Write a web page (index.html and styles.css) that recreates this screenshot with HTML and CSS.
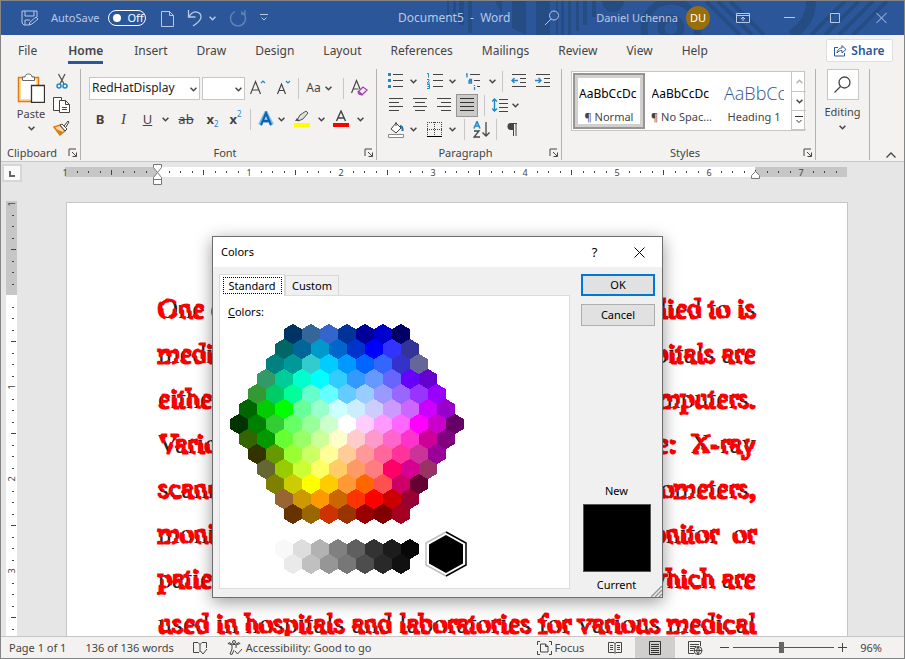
FILE: index.html
```html
<!DOCTYPE html>
<html lang="en">
<head>
<meta charset="utf-8">
<title>Document5 - Word</title>
<link rel="stylesheet" href="styles.css">
</head>
<body>
<svg class="defs" aria-hidden="true">
  <symbol id="chev" viewBox="0 0 6 6"><path d="M.5 1.500 3 4l2.500-2.500" fill="none" stroke="currentColor" stroke-width="1.300"/></symbol>
  <symbol id="launch" viewBox="0 0 10 10"><path d="M1 8V1h7M4 4l4 4M8.500 4.500v4h-4" fill="none" stroke="#444"/></symbol>
</svg>
<div class="window">
  <header class="titlebar">
    <svg class="pattern" viewBox="0 0 465 34" preserveAspectRatio="xMaxYMin slice" fill="#264d83" aria-hidden="true">
      <path d="M8 0h2v18H8zM14 0h3v18h-3zM20 0h5v24h-5zM29 0h4v32h-4zM56 0h7v14zM73 0h14v34l-14-7zM97 0h14v34H97zM117 0h2v34h-2zM122 0h3v34h-3zM129 0h3v34h-3zM137 0h3v30h-3zM144 0h4v24h-4zM153 0h4v16h-4z"/>
      <circle cx="174" cy="0" r="11"/>
      <g fill="none" stroke="#264d83" stroke-width="7"><circle cx="232" cy="27" r="10"/><circle cx="232" cy="27" r="27"/><path d="M267 0l34 34M279 0l34 34M291 0l34 34" stroke-width="4"/><path d="M372 0q0 22-20 34" stroke-width="10"/><path d="M372 34 406 0M386 34 420 0M400 34 434 0M414 34 448 0" stroke-width="4"/></g>
    </svg>
    <div class="quick">
      <button aria-label="Save"><svg width="17" height="17" viewBox="0 0 17 17" fill="none" stroke="currentColor"><path d="M8 15H3l-2-2V1h15v6M4 1v5h9V1M4 15v-5h5M8 15l1-3 6-5 2 2-6 5z"/></svg></button>
      <label class="autosave">AutoSave <input type="checkbox" role="switch"><span class="switch">Off</span></label>
      <button aria-label="New"><svg width="13" height="17" viewBox="0 0 13 17" fill="none" stroke="currentColor"><path d="M.5 1.500h8l4 4v11H.5zM8.500 1.500v4h4"/></svg></button>
      <button class="undo" aria-label="Undo"><svg width="16" height="18" viewBox="0 0 16 18" fill="none" stroke="currentColor" stroke-width="1.300"><path d="M1.500 1v7h7M2 7.500C7 0 14 3 14 8c0 4-5 7-8 9"/></svg><svg class="ch"><use href="#chev"/></svg></button>
      <button class="faded" aria-label="Repeat"><svg width="18" height="18" viewBox="0 0 18 18" fill="none" stroke="currentColor" stroke-width="1.300"><path d="M6 2.500A7.500 7.500 0 1 0 12 2.500M16 1v4h-4"/></svg></button>
      <button aria-label="Customize"><svg width="8" height="8" viewBox="0 0 8 8" fill="none" stroke="currentColor"><path d="M0 .5h8M1.500 3.500 4 6l2.500-2.500"/></svg></button>
    </div>
    <div class="doc-name">Document5&nbsp; -&nbsp; Word</div>
    <div class="account">
      <button aria-label="Search"><svg width="16" height="16" viewBox="0 0 16 16" fill="none" stroke="currentColor"><circle cx="10" cy="5.500" r="4.500"/><path d="m7 9-6 6"/></svg></button>
      <span>Daniel Uchenna</span><b class="avatar">DU</b>
    </div>
    <div class="controls">
      <button aria-label="Ribbon options"><svg width="14" height="12" viewBox="0 0 14 12" fill="none" stroke="currentColor"><path d="M.5 1.500h13v9H.5zM.5 3.500h13M7 9V5M5 7l2-2 2 2"/></svg></button>
      <button aria-label="Minimize"><svg width="11" height="12" stroke="currentColor"><path d="M0 5.500h11"/></svg></button>
      <button aria-label="Maximize"><svg width="11" height="12" fill="none" stroke="currentColor"><path d="M.5 1.500h9v9h-9z"/></svg></button>
      <button aria-label="Close"><svg width="11" height="12" stroke="currentColor"><path d="m.5 1 10 10m0-10-10 10"/></svg></button>
    </div>
  </header>

  <nav class="tabs">
    <a href="#file">File</a><a href="#home" class="active">Home</a><a href="#insert">Insert</a><a href="#draw">Draw</a><a href="#design">Design</a><a href="#layout">Layout</a><a href="#references">References</a><a href="#mailings">Mailings</a><a href="#review">Review</a><a href="#view">View</a><a href="#help">Help</a>
    <button class="share"><svg width="13" height="13" viewBox="0 0 13 13" fill="none" stroke="currentColor"><path d="M4 3.500H.5v8.500h10V9M3 9c.5-4 3-5 5-5V1.500L12 5.500 8 9V6.500C6 6.500 4 7 3 9z"/></svg>Share</button>
  </nav>

  <section class="ribbon">
    <div class="group clipboard">
      <div class="tools">
        <button class="paste"><svg width="28" height="30" viewBox="0 0 28 30" fill="none"><path d="M1.500 4.500h20v24h-20z" fill="#fcdd9e" stroke="#e07b12" stroke-width="1.500"/><path d="M4 7h15v19H4z" fill="#fff"/><path d="M5.500 7.500V4H8C8 0 15 0 15 4h2.500v3.500z" fill="#fff" stroke="#666"/><path d="M14.500 12.500h13v17h-13z" fill="#fff" stroke="#333" stroke-width="1.300"/></svg>Paste<svg class="ch"><use href="#chev"/></svg></button>
        <div class="clip-side">
          <button aria-label="Cut"><svg width="12" height="17" viewBox="0 0 12 17" fill="none"><path d="M2.500 1 8 11M9 1 4 11" stroke="#555" stroke-width="1.300"/><circle cx="3" cy="13" r="2" stroke="#1e88c9" stroke-width="1.500"/><circle cx="9" cy="13" r="2" stroke="#1e88c9" stroke-width="1.500"/></svg></button>
          <button aria-label="Copy"><svg width="17" height="16" viewBox="0 0 17 16" fill="#fff" stroke="#444"><path d="M6 13.500H.5V.5h8V3M6.500 3.500h6l4 4v8h-10zM12.500 3.500v4h4M9 10.500h5M9 12.500h5"/></svg></button>
          <button aria-label="Format Painter"><svg width="17" height="16" viewBox="0 0 17 16"><path d="m1 7 6-2 5 6-5 4z" fill="#fcd9a5" stroke="#e07b12" stroke-width="1.500"/><path d="m3 9 7 3-3 3z" fill="#e07b12"/><path d="m7 5 2-1 5 5-2 2zM11 6l4-5 1 1-3 5" fill="#fff" stroke="#444"/></svg></button>
        </div>
      </div>
      <div class="caption"><span>Clipboard</span><button aria-label="Clipboard options"><svg><use href="#launch"/></svg></button></div>
    </div>

    <div class="group font">
      <div class="tools">
        <div class="row f1">
          <span class="pick"><select class="face" aria-label="Font"><option>RedHatDisplay</option></select><svg class="ch"><use href="#chev"/></svg></span>
          <span class="pick small"><select aria-label="Font size"><option></option></select><svg class="ch"><use href="#chev"/></svg></span>
          <button aria-label="Grow font"><svg width="16" height="20" viewBox="0 0 16 20" fill="none" stroke="#444" stroke-width="1.200"><path d="M.5 16 5.500 3.500 10.500 16M2.500 12h6"/><path d="m11 5 2-2 2 2" stroke="#1e88c9"/></svg></button>
          <button aria-label="Shrink font"><svg width="15" height="20" viewBox="0 0 15 20" fill="none" stroke="#444" stroke-width="1.200"><path d="M1.500 16 5.500 6l4 10M3 12.500h5"/><path d="m10 3 2 2 2-2" stroke="#1e88c9"/></svg></button>
          <i class="bar"></i>
          <button class="case">Aa<svg class="ch"><use href="#chev"/></svg></button>
          <i class="bar"></i>
          <button aria-label="Clear formatting"><svg width="17" height="18" viewBox="0 0 17 18" fill="none" stroke="#444" stroke-width="1.200"><path d="M.5 14 5.500 1.500 9 10M2.500 10h5"/><path d="m7 13 5-5 4 3-5 5-3-1z" fill="#f3f2f1" stroke="#a63db0" stroke-width="1.300"/><path d="m8.500 12 3 3-2 1-2-2z" fill="#a63db0" stroke="none"/></svg></button>
        </div>
        <div class="row f2">
          <button><b>B</b></button><button class="ital">I</button><button><u>U</u></button><button aria-label="Underline style"><svg class="ch"><use href="#chev"/></svg></button>
          <button><s>ab</s></button><button class="script"><b>x</b><sub>2</sub></button><button class="script"><b>x</b><sup>2</sup></button><i class="bar"></i>
          <button aria-label="Text effects"><svg width="16" height="16" viewBox="0 0 16 16" fill="none"><path d="M2 14 8 2l6 12M5 10h6" stroke="#7dbdea" stroke-width="4"/><path d="M3 14 8 2l5 12M5 10h6" stroke="#0c62ad" stroke-width="2"/></svg></button>
          <button aria-label="Effects list"><svg class="ch"><use href="#chev"/></svg></button>
          <button aria-label="Highlight"><svg width="17" height="18" viewBox="0 0 17 18"><path d="m4 10 3-5 6-4 2 2-5 6-5 2z" fill="#ddd" stroke="#555"/><path d="M1 13h16v4H1z" fill="#ff0"/><path d="m2 11 2-3 3 3z" fill="#555"/></svg></button>
          <button aria-label="Highlight list"><svg class="ch"><use href="#chev"/></svg></button>
          <button aria-label="Font color"><svg width="16" height="18" viewBox="0 0 16 18"><path d="M3.500 11 8 1l4.500 10M5 8h6" fill="none" stroke="#444" stroke-width="1.400"/><path d="M0 13h16v4H0z" fill="red"/></svg></button>
          <button aria-label="Color list"><svg class="ch"><use href="#chev"/></svg></button>
        </div>
      </div>
      <div class="caption"><span>Font</span><button aria-label="Font options"><svg><use href="#launch"/></svg></button></div>
    </div>

    <div class="group para">
      <div class="tools">
        <div class="row p1">
          <button aria-label="Bullets"><svg width="17" height="16" viewBox="0 0 17 16"><path d="M1 0h3v3H1zM1 6h3v3H1zM1 12h3v3H1z" fill="#1e88c9"/><path d="M6 1.500h10M6 7.500h10M6 13.500h10" stroke="#444"/></svg></button><button aria-label="Bullet list"><svg class="ch"><use href="#chev"/></svg></button>
          <button aria-label="Numbering"><svg width="17" height="16" viewBox="0 0 17 16" fill="none"><path d="M1 .5h1.500v4M1 6.500h2v1.500l-2 2h3M1 11.500h2.500v4H1M1.500 13.500h2" stroke="#1e88c9"/><path d="M7 1.500h10M7 7.500h10M7 13.500h10" stroke="#444"/></svg></button><button aria-label="Number list"><svg class="ch"><use href="#chev"/></svg></button>
          <button aria-label="Multilevel list"><svg width="16" height="17" viewBox="0 0 16 17" fill="none"><path d="M1 1h1v3.500M4 6.500h2.500V10H4V8h2M9.500 12v1M9.500 14v3" stroke="#1e88c9" stroke-width="1.300"/><path d="M5 1.500h10M9 7.500h6M12 13.500h3" stroke="#444"/></svg></button><button aria-label="Levels"><svg class="ch"><use href="#chev"/></svg></button>
          <i class="bar"></i>
          <button aria-label="Decrease indent"><svg width="15" height="14" viewBox="0 0 15 14" fill="none" stroke="#444"><path d="M1 .5h14M9 4.500h6M9 8.500h6M1 12.500h14"/><path d="M7 6.500H1M3.500 4 1 6.500 3.500 9" stroke="#1e88c9" stroke-width="1.400"/></svg></button>
          <button aria-label="Increase indent"><svg width="15" height="14" viewBox="0 0 15 14" fill="none" stroke="#444"><path d="M1 .5h14M9 4.500h6M9 8.500h6M1 12.500h14"/><path d="M0 6.500h6M3.500 4 6 6.500 3.500 9" stroke="#1e88c9" stroke-width="1.400"/></svg></button>
        </div>
        <div class="row p2">
          <button aria-label="Align left"><svg width="15" height="14" viewBox="0 0 15 14" stroke="#444"><path d="M0 .5h14M0 4.500h10M0 8.500h14M0 12.500h10"/></svg></button>
          <button aria-label="Center"><svg width="15" height="14" viewBox="0 0 15 14" stroke="#444"><path d="M0 .5h14M2 4.500h10M0 8.500h14M2 12.500h10"/></svg></button>
          <button aria-label="Align right"><svg width="15" height="14" viewBox="0 0 15 14" stroke="#444"><path d="M0 .5h14M4 4.500h10M0 8.500h14M4 12.500h10"/></svg></button>
          <button class="on" aria-label="Justify"><svg width="14" height="14" viewBox="0 0 14 14" stroke="#333"><path d="M0 .5h14M0 4.500h14M0 8.500h14M0 12.500h14"/></svg></button>
          <i class="bar"></i>
          <button aria-label="Line spacing"><svg width="16" height="14" viewBox="0 0 16 14" fill="none" stroke="#444"><path d="M7 1.500h9M7 5.500h9M7 9.500h9M7 13.500h9"/><path d="M2.500 1v12M0 3.500 2.500 1 5 3.500M0 10.500 2.500 13 5 10.500" stroke="#1e88c9" stroke-width="1.400"/></svg></button><button aria-label="Spacing list"><svg class="ch"><use href="#chev"/></svg></button>
        </div>
        <div class="row p3">
          <button aria-label="Shading"><svg width="17" height="17" viewBox="0 0 17 17"><path d="m3 8 5-6 5 5-5 5zM8 5V1" fill="#fff" stroke="#444"/><path d="M12 5q3 0 2.500 5" fill="none" stroke="#1e6fb0" stroke-width="2"/><path d="M.5 13.500h15v3H.5z" fill="#fff" stroke="#888"/></svg></button><button aria-label="Shades"><svg class="ch"><use href="#chev"/></svg></button>
          <button aria-label="Borders"><svg width="15" height="15" viewBox="0 0 15 15" fill="none" stroke="#444"><path d="M.5 0v14M14.500 0v14M7.500 0v14M0 .5h15M0 7.500h15" stroke-dasharray="1 1"/><path d="M0 14.500h15" stroke="#000"/></svg></button><button aria-label="Border list"><svg class="ch"><use href="#chev"/></svg></button>
          <i class="bar"></i>
          <button aria-label="Sort"><svg width="17" height="17" viewBox="0 0 17 17" fill="none" stroke="#444" stroke-width="1.300"><path d="M1 7.500 4 .5l3 7M2 5h4" stroke="#1e88c9" stroke-width="1.500"/><path d="M1 10h5l-5 6h6M13 1v14M9.500 11.500 13 15l3.500-3.500"/></svg></button>
          <i class="bar"></i>
          <button aria-label="Show marks"><svg width="11" height="13" viewBox="0 0 11 13"><path d="M10 .5H4.500M6.500 0v13M9 .5V13" fill="none" stroke="#444"/><path d="M7 0H4a3.500 3.500 0 0 0 0 7h3z" fill="#444"/></svg></button>
        </div>
      </div>
      <div class="caption"><span>Paragraph</span><button aria-label="Paragraph options"><svg><use href="#launch"/></svg></button></div>
    </div>

    <div class="group styles">
      <div class="tools">
        <div class="gallery">
          <button class="chosen"><span>AaBbCcDc</span><small>¶ Normal</small></button>
          <button><span>AaBbCcDc</span><small>¶ No Spac...</small></button>
          <button class="heading"><span>AaBbCc</span><small>Heading 1</small></button>
          <div class="scroller">
            <button aria-label="Up" disabled><svg class="ch up"><use href="#chev"/></svg></button>
            <button aria-label="Down"><svg class="ch"><use href="#chev"/></svg></button>
            <button aria-label="More"><svg width="8" height="8" viewBox="0 0 8 8" fill="none" stroke="#333"><path d="M0 .5h8M1.500 4 4 6.500 6.500 4"/></svg></button>
          </div>
        </div>
      </div>
      <div class="caption"><span>Styles</span><button aria-label="Style options"><svg><use href="#launch"/></svg></button></div>
    </div>

    <div class="group editing">
      <button><span class="lens"><svg width="17" height="17" viewBox="0 0 17 17" fill="none" stroke="#444" stroke-width="1.300"><circle cx="10.500" cy="6.500" r="5.500"/><path d="m6.500 10.500-6 6"/></svg></span>Editing<svg class="ch"><use href="#chev"/></svg></button>
    </div>
    <button class="collapse" aria-label="Collapse ribbon"><svg width="10" height="6" fill="none" stroke="#444" stroke-width="1.300"><path d="m.5 5.500 4.500-4.500 4.500 4.500"/></svg></button>
  </section>

  <main class="workspace">
    <div class="tabstop"><i></i></div>
    <svg class="hruler" viewBox="0 0 783 20" id="hruler" aria-hidden="true"></svg>
    <svg class="vruler" viewBox="0 0 12 435" id="vruler" aria-hidden="true"></svg>
    <article class="page">
      <svg class="line"><text x="0" y="25">One o</text><text class="end" x="100%" y="25">lied to is</text></svg>
      <svg class="line"><text x="0" y="25">medi</text><text class="end" x="100%" y="25">pitals are</text></svg>
      <svg class="line"><text x="0" y="25">eithe</text><text class="end" x="100%" y="25">mputers.</text></svg>
      <svg class="line"><text x="0" y="25">Vario</text><text class="end" x="100%" y="25">e:&nbsp; X-ray</text></svg>
      <svg class="line"><text x="0" y="25">scann</text><text class="end" x="100%" y="25">ometers,</text></svg>
      <svg class="line"><text x="0" y="25">moni</text><text class="end" x="100%" y="25">onitor&nbsp; or</text></svg>
      <svg class="line"><text x="0" y="25">patie</text><text class="end" x="100%" y="25">which are</text></svg>
      <svg class="line"><text x="0" y="25">used in hospitals and laboratories for various medical</text></svg>
    </article>
  </main>

  <footer class="status">
    <span>Page 1 of 1</span><span>136 of 136 words</span>
    <svg width="15" height="14" viewBox="0 0 15 14" fill="none" stroke="#444"><path d="M6 11.500H.5v-10H5l2 2 2-2h4.500V7M7 3v8M7.500 10l2.500 3 4-5"/></svg>
    <span class="access"><svg width="16" height="15" viewBox="0 0 16 15" fill="none" stroke="#444"><circle cx="7" cy="2" r="1.500"/><path d="M1 3.500 5 5v4l-2 5 2 .5L7 10M13 3.500 9 5v3M1 3.500l1-1 4 2h2l4-2 1 1M8 11l2.500 3 4.500-5"/></svg>Accessibility: Good to go</span>
    <div class="views">
      <button><svg width="15" height="14" viewBox="0 0 15 14" fill="none" stroke="#444"><path d="M3 .5H.5V4M.5 10v3.500H3M12 .5h2.500V4M14.500 10v3.500H12M3.500 3h5l2.500 2.500V11H3.500zM8.500 3v2.500H11"/></svg>Focus</button>
      <button aria-label="Read mode"><svg width="14" height="13" viewBox="0 0 14 13" fill="none" stroke="#444"><path d="M.5 1.500H6l1 1 1-1h5.500v10H8l-1 1-1-1H.5zM7 2v10M2 4.500h3M2 6.500h3M2 8.500h3M9 4.500h3M9 6.500h3M9 8.500h3"/></svg></button>
      <button class="current" aria-label="Print layout"><svg width="12" height="14" viewBox="0 0 12 14" fill="none" stroke="#333"><path d="M.5.5h11v13H.5zM2 3.500h8M2 5.500h8M2 7.500h8M2 9.500h8M2 11.500h8"/></svg></button>
      <button aria-label="Web layout"><svg width="15" height="14" viewBox="0 0 15 14" fill="none" stroke="#444"><path d="M6 12.500H.5V.5h12V5M2 3.500h9M2 5.500h6M2 7.500h4M2 9.500h3"/><circle cx="10" cy="9.500" r="4"/><path d="M6 9.500h8M10 5.500q-3 4 0 8 3-4 0-8"/></svg></button>
    </div>
    <div class="zoom"><button aria-label="Zoom out"><svg width="9" height="9" stroke="#444"><path d="M0 4.500h9"/></svg></button><input type="range" aria-label="Zoom" value="48"><button aria-label="Zoom in"><svg width="9" height="9" stroke="#444"><path d="M0 4.500h9M4.500 0v9"/></svg></button><span>96%</span></div>
  </footer>

  <section class="dialog" role="dialog" aria-label="Colors">
    <div class="dialog-title"><span>Colors</span><button aria-label="Help">?</button><button aria-label="Close dialog"><svg width="11" height="11" stroke="#000"><path d="m.5.5 10 10m0-10-10 10"/></svg></button></div>
    <div class="dialog-body">
      <div class="picker">
        <div class="dialog-tabs"><button class="front"><span>Standard</span></button><button>Custom</button></div>
        <div class="panel">
          <p><u>C</u>olors:</p>
          <svg id="palette" viewBox="0 0 240 256" width="240" height="256" role="img" aria-label="Colors"></svg>
        </div>
      </div>
      <div class="side">
        <button class="ok">OK</button><button>Cancel</button>
        <div class="preview"><span>New</span><i></i><span>Current</span></div>
      </div>
    </div>
    <svg class="grip" width="11" height="11" stroke="#999" stroke-width="1.500"><path d="M0 11 11 0M4 11l7-7M8 11l3-3"/></svg>
  </section>
</div>
<script src="script.js"></script>
</body>
</html>
```
FILE: styles.css
```css
* { box-sizing: border-box; }
body { margin: 0; font: 12px/16px "Noto Sans", "Open Sans", sans-serif; color: #444; }
button { font: inherit; color: inherit; background: none; border: 0; padding: 0; display: flex; align-items: center; justify-content: center; }
a { color: inherit; text-decoration: none; }
svg { display: block; flex: none; }
.defs { position: absolute; width: 0; height: 0; }
.ch { width: 7px; height: 7px; }
.window { position: relative; height: 100vh; display: flex; flex-direction: column; border: 1px solid #858585; background: #f3f2f1; overflow: hidden; }

.titlebar { position: relative; flex: none; height: 34px; display: flex; align-items: center; background: #2b579a; color: #b8c9e4; font-size: 11px; }
.pattern { position: absolute; right: 0; top: 0; width: 465px; height: 34px; }
.titlebar > div { position: relative; display: flex; align-items: center; }
.quick { padding-left: 20px; width: 397px; gap: 13px; }
.autosave { display: flex; align-items: center; gap: 9px; margin-right: 2px; }
.autosave input { position: absolute; opacity: 0; width: 38px; margin: 0; }
.switch { width: 38px; height: 16px; border: 1px solid #fff; border-radius: 8px; color: #fff; line-height: 14px; padding-left: 18px; position: relative; }
.switch::before { content: ""; position: absolute; left: 4px; top: 3px; width: 8px; height: 8px; border-radius: 50%; background: #fff; }
.undo { gap: 6px; }
.faded { opacity: .4; }
.titlebar .doc-name { flex: 1; font-size: 12px; }
.account { gap: 8px; }
.account > button { margin-right: 28px; }
.avatar { width: 24px; height: 24px; line-height: 24px; border-radius: 50%; background: #986f0b; color: #fff; text-align: center; font-weight: 400; }
.controls { margin-left: 10px; }
.controls button { width: 46px; height: 32px; }

.tabs { flex: none; height: 31px; display: flex; align-items: center; gap: 29px; padding: 0 11px 0 17px; }
.tabs a { height: 26px; line-height: 26px; border-bottom: 3px solid transparent; }
.tabs .active { font-weight: 600; border-color: #2b579a; margin: 0 2px; }
.share { margin-left: auto; width: 67px; height: 23px; gap: 4px; background: #fff; border: 1px solid #e1dfdd; border-radius: 2px; color: #2b579a; font-weight: 600; }

.ribbon { flex: none; height: 96px; display: flex; border-bottom: 1px solid #c8c8c8; }
.group { position: relative; display: flex; flex-direction: column; height: 91px; margin-top: 3px; border-right: 1px solid #b4b2b0; flex: none; }
.clipboard { width: 80px; }
.font { width: 296px; }
.para { width: 185px; }
.styles { width: 254px; }
.editing { width: 54px; }
.tools { flex: 1; }
.caption { display: flex; height: 16px; font-size: 11px; margin-bottom: -1px; align-items: center; padding: 0 1px 0 6px; }
.caption span { flex: 1; text-align: center; }
.caption svg { width: 10px; height: 10px; }
.caption button { width: 12px; }
.clipboard .tools { display: flex; padding: 4px 0 0 16px; }
.clipboard .caption span { text-align: left; }
.paste { flex-direction: column; justify-content: flex-start; gap: 3px; width: 28px; font-size: 11px; }
.clip-side { display: flex; flex-direction: column; align-items: center; gap: 7px; padding-left: 8px; }
.row { display: grid; align-items: center; height: 24px; font-size: 13px; }
.bar { width: 1px; height: 21px; background: #c8c6c4; justify-self: center; }
.font .tools { padding: 7px 0 0 8px; }
.f1 { grid-template-columns: 113px 43px 26px 24px 6px 36px 12px 20px; }
.f2 { grid-template-columns: 22px 25px 23px 12px 30px 23px 23px 6px 25px 7px 33px 6px 33px 6px; margin-top: 7px; }
.pick { position: relative; width: 111px; height: 23px; }
.small { width: 43px; }
.pick svg { position: absolute; right: 3px; top: 9px; }
select { appearance: none; height: 23px; width: 100%; border: 1px solid #c8c6c4; border-radius: 0; background: #fff; color: #222; font: 12px/16px "Noto Sans", sans-serif; padding: 0 2px; }
.case { gap: 4px; font-size: 12px; }
.ital { font-style: italic; font-family: "Liberation Serif", serif; font-size: 15px; }
.script sub, .script sup { font-size: 8px; line-height: 8px; color: #1e88c9; margin-top: 10px; }
.script sup { margin: -10px 0 0; }
.para .tools { padding: 0 0 0 7px; }
.p1 { grid-template-columns: 22px 14px 28px 8px 34px 4px 16px 16px 33px; }
.p2 { grid-template-columns: 24px 24px 24px 24px 8px 24px 6px; }
.p3 { grid-template-columns: 24px 10px 32px 4px 20px 15px 14px 18px; }
.on { height: 23px; width: 22px; background: #cdcbc9; border: 1px solid #979593; }
.styles .tools { padding: 2px 0 0 9px; }
.gallery { display: grid; grid-template-columns: 74px 71px 74px 15px; width: 234px; height: 60px; border: 1px solid #c8c6c4; background: #fff; }
.gallery > button { flex-direction: column; justify-content: flex-start; padding: 12px 5px 0; overflow: hidden; gap: 6px; }
.gallery span { width: 60px; height: 19px; line-height: 19px; overflow: hidden; color: #000; text-align: left; }
.gallery small { font-size: 11px; white-space: nowrap; }
.gallery .chosen { padding-top: 9px; border: 2px solid #979593; margin: 1px; box-shadow: inset 0 0 0 3px #d2d0ce; }
.gallery .heading span { color: #2f5496; font: 300 18px/19px "Open Sans", sans-serif; }
.scroller { display: grid; grid-template-rows: 20px 19px 19px; }
.scroller button { border: 1px solid #c8c6c4; border-width: 0 0 1px 1px; }
.up { transform: rotate(180deg); opacity: .4; }
.editing button { flex-direction: column; gap: 4px; font-size: 11px; }
.lens { width: 32px; height: 31px; border: 1px solid #c8c6c4; background: #fff; display: grid; place-items: center; }
.collapse { margin: auto 7px 3px auto; width: 12px; }

.workspace { flex: 1; min-height: 0; position: relative; display: grid; grid-template: 40px 1fr / 65px 1fr 57px; background: #e6e6e6; overflow: hidden; }
.tabstop { margin: 2px 0 0 1px; width: 20px; height: 18px; background: #fafafa; border: 2px solid #d6d6d6; }
.tabstop i { display: block; width: 6px; height: 6px; margin: 5px; border: solid #666; border-width: 0 0 2px 2px; }
.hruler { grid-column: 2; width: 783px; height: 20px; margin: 4px 0 0 -1px; overflow: visible; }
.vruler { grid-row: 2; width: 12px; height: 435px; margin: -1px 0 0 5px; }
.page { grid-column: 2; grid-row: 2; background: #fff; border: 1px solid #c6c6c6; border-bottom: 0; padding: 90px 91px 0; overflow: hidden; }
.line { width: 100%; height: 34px; margin-bottom: 11px; overflow: visible; font: 28px "Liberation Serif", serif; fill: #20242a; stroke: red; stroke-width: 3px; stroke-linecap: round; stroke-dasharray: 6 7 9 12; }
.end { text-anchor: end; }

.status { flex: none; height: 22px; display: flex; align-items: center; border-top: 1px solid #c6c6c6; padding: 0 22px 0 8px; font-size: 11px; gap: 19px; }
.access, .views button { display: flex; align-items: center; gap: 3px; }
.views { display: flex; margin-left: auto; align-self: stretch; }
.views button { min-width: 40px; }
.views button:first-child { margin-right: 11px; }
.views .current { background: #d0cfce; }
.zoom { display: flex; align-items: center; gap: 4px; margin-left: -14px; }
.zoom span { margin-left: 9px; }
.zoom input { appearance: none; width: 101px; height: 12px; margin: 0; background: linear-gradient(#555, #555) center / 100% 1px no-repeat; }
.zoom input::-webkit-slider-thumb { appearance: none; width: 5px; height: 11px; background: #666; }

.dialog { position: absolute; left: 211px; top: 235px; width: 451px; height: 362px; display: flex; flex-direction: column; border: 1px solid #6d6d6d; background: #f0f0f0; color: #000; font-size: 11px; box-shadow: 0 4px 16px rgba(0, 0, 0, .4); }
.dialog-title { height: 30px; display: flex; align-items: center; background: #fff; padding-left: 8px; flex: none; }
.dialog-title span { flex: 1; }
.dialog-title button { width: 45px; font-size: 13px; }
.dialog-body { flex: 1; display: flex; gap: 11px; padding: 7px 7px 8px 6px; }
.picker { flex: 1; display: flex; flex-direction: column; }
.dialog-tabs { display: flex; align-items: flex-end; height: 21px; }
.dialog-tabs button { height: 20px; width: 54px; border: 1px solid #d9d9d9; border-bottom: 0; }
.dialog-tabs .front { position: relative; height: 22px; width: 66px; margin-bottom: -1px; background: #fff; }
.front span { border: 1px dotted #000; width: 59px; line-height: 15px; }
.panel { flex: 1; border: 1px solid #dcdcdc; background: #fff; padding: 8px; }
.panel p { margin: 0; }
.panel svg { margin: 4px 0 0 1px; }
.side { width: 74px; display: flex; flex-direction: column; gap: 8px; }
.side button { height: 22px; border: 1px solid #adadad; background: #e1e1e1; }
.side .ok { border: 2px solid #0078d7; }
.preview { margin: auto 3px -4px 0; display: flex; flex-direction: column; align-items: center; gap: 5px; }
.preview i { width: 68px; height: 68px; background: #000; border: 1px solid #555; }
.grip { position: absolute; right: 0; bottom: 0; }
```
FILE: script.js
```js
const NS = "http://www.w3.org/2000/svg";
function draw(parent, tag, attrs, text) {
  const node = document.createElementNS(NS, tag);
  for (const key in attrs) node.setAttribute(key, attrs[key]);
  if (text) node.textContent = text;
  parent.appendChild(node);
}

const rows = [
  "003366 336699 3366cc 003399 000099 0000cc 000066",
  "006666 006699 0099cc 0066cc 0033cc 0000ff 3333ff 333399",
  "008080 009999 33cccc 00ccff 0099ff 0066ff 3366ff 3333cc 666699",
  "339966 00cc99 00ffcc 00ffff 33ccff 3399ff 6699ff 6666ff 6600ff 6600cc",
  "339933 00cc66 00ff99 66ffcc 66ffff 66ccff 99ccff 9999ff 9966ff 9933ff 9900ff",
  "006600 00cc00 00ff00 66ff99 99ffcc ccffff ccecff ccccff cc99ff cc66ff cc00ff 9900cc",
  "003300 008000 33cc33 66ff66 99ff99 ccffcc ffffff ffccff ff99ff ff66ff ff00ff cc00cc 660066",
  "336600 009900 66ff33 99ff66 ccff99 ffffcc ffcccc ff99cc ff66cc ff33cc cc0099 800080",
  "333300 669900 99ff33 ccff66 ffff99 ffcc99 ff9999 ff6699 ff3399 cc3399 990099",
  "666633 99cc00 ccff33 ffff66 ffcc66 ff9966 ff7c80 ff0066 d60093 993366",
  "808000 cccc00 ffff00 ffcc00 ff9933 ff6600 ff5050 cc0066 660033",
  "996633 cc9900 ff9900 cc6600 ff3300 ff0000 cc0000 990033",
  "663300 996600 cc3300 993300 990000 800000 a50021"
];
const palette = document.getElementById("palette");
function hexRow(colors, centerX, y) {
  colors.split(" ").forEach((color, i, all) => {
    const x = centerX + (i - (all.length - 1) / 2) * 18;
    draw(palette, "path", { d: `M${x} ${y - 10}l9 5v10l-9 5-9-5v-10z`, fill: "#" + color, "shape-rendering": "crispEdges" });
  });
}
rows.forEach((colors, r) => hexRow(colors, 118, 10 + r * 15));
hexRow("f8f8f8 dddddd b2b2b2 808080 5f5f5f 333333 1c1c1c 080808", 118, 225);
hexRow("eaeaea c0c0c0 969696 777777 4d4d4d 292929 111111", 118, 240);
draw(palette, "path", { d: "M217 211l17 9.500v19l-17 9.500-17-9.500v-19z", fill: "#000" });
draw(palette, "path", { d: "M217 208l-20 11v22l20 11", fill: "none", stroke: "#c0c0c0", "stroke-width": 1.5 });
draw(palette, "path", { d: "M217 208l20 11v22l-20 11", fill: "none", stroke: "#000", "stroke-width": 1.5 });

const h = document.getElementById("hruler");
const v = document.getElementById("vruler");
draw(h, "rect", { y: 1, width: 782, height: 10, fill: "#fff" });
draw(h, "rect", { y: 1, width: 92, height: 10, fill: "#c6c6c6" });
draw(h, "rect", { x: 690, y: 1, width: 92, height: 10, fill: "#c6c6c6" });
draw(v, "rect", { width: 11, height: 435, fill: "#fff" });
draw(v, "rect", { width: 11, height: 94, fill: "#c6c6c6" });
const label = { fill: "#444", "font-size": 9, "text-anchor": "middle" };
for (let i = -8; i <= 59; i++) {
  const x = Math.round(92 + i * 11.5);
  const y = Math.round(94 + i * 11.5);
  const mark = Math.abs(i / 8);
  if (i % 8 === 0) {
    if (i) draw(h, "text", { ...label, x, y: 10 }, String(mark));
    if (i && y < 435) draw(v, "text", { ...label, transform: `translate(9 ${Math.max(y, 3)}) rotate(-90)` }, String(mark));
  } else {
    const half = i % 4 === 0;
    draw(h, "rect", { x, y: half ? 4 : 5, width: 1, height: half ? 5 : 2, fill: "#444" });
    if (y < 435) draw(v, "rect", { x: half ? 5 : 6, y, width: half ? 5 : 2, height: 1, fill: "#444" });
  }
}
draw(h, "path", { d: "M88.500-1.500h8v3l-4 5-4-5zM88.500 11.500l4-5 4 5v7h-8zM88.500 13.500h8", fill: "#fff", stroke: "#777" });
draw(h, "path", { d: "M686.500 12.500v-3l4-4 4 4v3z", fill: "#fff", stroke: "#777" });
```
